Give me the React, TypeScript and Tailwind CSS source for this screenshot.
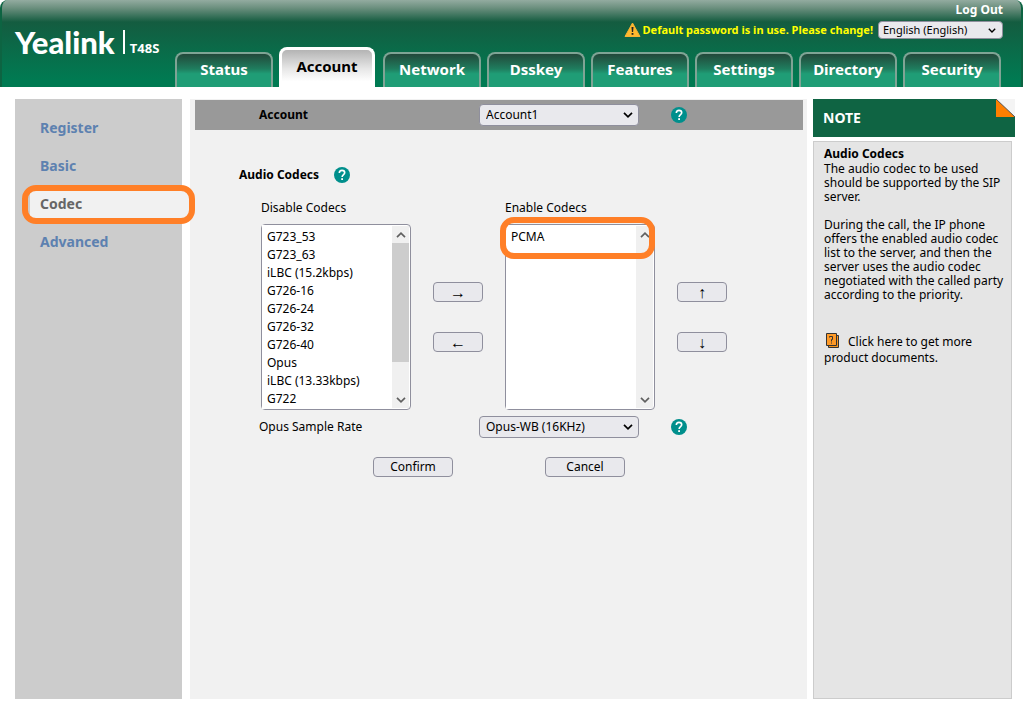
import { useState } from 'react';
import type { ReactNode } from 'react';
import clsx from 'clsx';

const TABS = ['Status', 'Account', 'Network', 'Dsskey', 'Features', 'Settings', 'Directory', 'Security'];
const MENU = ['Register', 'Basic', 'Codec', 'Advanced'];

const DISABLED_CODECS = [
  'G723_53',
  'G723_63',
  'iLBC (15.2kbps)',
  'G726-16',
  'G726-24',
  'G726-32',
  'G726-40',
  'Opus',
  'iLBC (13.33kbps)',
  'G722',
];

function Chevron({ className }: { className: string }) {
  return (
    <svg viewBox="0 0 10 6" className={className} fill="none" stroke="currentColor" strokeWidth="1.7">
      <path d="M1 0.8 5 4.8 9 0.8" />
    </svg>
  );
}

function HelpIcon() {
  return (
    <button type="button" aria-label="Help" className="h-4 w-4 shrink-0">
      <svg viewBox="0 0 16 16" className="h-4 w-4">
        <circle cx="8" cy="8" r="8" fill="#008f8c" />
        <path d="M5.3 6.1C5.3 4.3 6.5 3.4 8 3.4s2.7.9 2.7 2.4c0 1.8-2.6 2-2.6 4.3" fill="none" stroke="#fff" strokeWidth="1.6" />
        <rect x="7.2" y="11.2" width="1.8" height="1.8" fill="#fff" />
      </svg>
    </button>
  );
}

function Dropdown({ id, options }: { id: string; options: string[] }) {
  return (
    <div className="grid w-40 shrink-0 items-center">
      <select
        id={id}
        className="col-start-1 row-start-1 h-[22px] appearance-none rounded border border-[#8f8f9d] bg-[#e9e9ed] pl-1.5 text-black"
      >
        {options.map(o => <option key={o}>{o}</option>)}
      </select>
      <Chevron className="pointer-events-none col-start-1 row-start-1 mr-1.5 h-1.5 w-2.5 justify-self-end" />
    </div>
  );
}

function FormButton({ children, label, className }: { children: ReactNode; label?: string; className: string }) {
  return (
    <button
      type="button"
      aria-label={label}
      className={clsx('flex h-5 items-center justify-center rounded border border-[#8f8f9d] bg-[#e9e9ed] hover:bg-[#d0d0d7]', className)}
    >
      {children}
    </button>
  );
}

function CodecList({ id, label, codecs, highlight, thumb }: { id: string; label: string; codecs: string[]; highlight?: boolean; thumb?: boolean }) {
  return (
    <div className="w-[150px]">
      <label htmlFor={id} className="block h-6 leading-4">{label}</label>
      <div className="relative flex h-[186px] rounded-sm border border-[#8f8f9d] bg-white">
        <select
          id={id}
          multiple
          size={10}
          className="min-w-0 flex-1 overflow-hidden bg-white pt-[3px] outline-none"
        >
          {codecs.map(c => (
            <option key={c} className="h-[18px] p-0 pl-[5px] leading-[18px]">{c}</option>
          ))}
        </select>
        <div className="my-px mr-px flex w-[17px] flex-col items-center justify-between bg-[#f0f0f0] text-[#606060]">
          <div className="flex h-[17px] items-center">
            <Chevron className="h-1.5 w-2.5 rotate-180" />
          </div>
          <div className={clsx('mb-auto h-[119px] w-full', thumb && 'bg-[#cdcdcd]')} />
          <div className="flex h-[17px] items-center">
            <Chevron className="h-1.5 w-2.5" />
          </div>
        </div>
        {highlight && (
          <div className="pointer-events-none absolute -top-2 -left-1.5 h-[42px] w-[155px] rounded-[14px] border-6 border-[#ff7f27]" />
        )}
      </div>
    </div>
  );
}

function Header() {
  return (
    <header className="flex h-[87px] rounded-t-lg border-x-2 border-x-[#0d6442] bg-linear-[to_bottom,#93aba0_0px,#6b8f7e_8px,#145c40_22px,#0a6b49_50px,#007a52_80px] pr-[18px]">
      <div className="flex w-[173px] shrink-0 items-end pb-[33px] pl-[13px] text-white">
        <span className="font-[Lato] text-[31px] leading-6 font-black">Yealink</span>
        <span className="mr-[5px] ml-2 h-6 w-0.5 bg-white" />
        <span className="text-[13px] leading-3 font-bold">T48S</span>
      </div>
      <div className="flex flex-1 flex-col items-end">
        <a href="#logout" className="h-[19px] pt-0.5 text-xs leading-4 font-bold text-white">Log Out</a>
        <div className="flex h-[22px] items-center">
          <svg viewBox="0 0 17 16" className="h-4 w-[17px]">
            <path d="M8.5 1 16 14.5H1Z" fill="#ffb92e" stroke="#f9b233" strokeLinejoin="round" />
            <path d="M7.5 5h2l-.4 5H7.9Z" fill="#222" />
            <rect x="7.6" y="11" width="1.8" height="1.8" fill="#222" />
          </svg>
          <span className="mr-[5px] ml-0.5 text-[11px] font-bold text-[#ffff00]">Default password is in use. Please change!</span>
          <div className="grid w-[125px] items-center">
            <select
              aria-label="Language"
              className="col-start-1 row-start-1 h-[18px] appearance-none rounded border border-[#8f8f9d] bg-[#e9e9ed] pl-1 text-[11px] text-black"
            >
              <option>English (English)</option>
            </select>
            <Chevron className="pointer-events-none col-start-1 row-start-1 mr-[7px] h-[5px] w-2 justify-self-end" />
          </div>
        </div>
        <nav className="flex w-full flex-1 items-end gap-1.5">
          {TABS.map(tab => (
            <a
              key={tab}
              href={`#${tab.toLowerCase()}`}
              className={clsx(
                'flex justify-center rounded-t-lg text-[15px] leading-5 font-bold',
                tab === 'Account'
                  ? 'mr-0.5 h-10 w-24 border-x-3 border-t-3 border-white bg-linear-[to_bottom,#b4b4b4,#e6e6e6_50%,#fff_85%] pt-1.5 text-black'
                  : 'h-[35px] w-[98px] border-x-2 border-t-2 border-[#7fa495] bg-linear-[to_bottom,#22483a,#1f7d5e_45%,#1f9d76_60%] pt-[5px] text-white'
              )}
            >
              {tab}
            </a>
          ))}
        </nav>
      </div>
    </header>
  );
}

function Sidebar() {
  return (
    <nav className="flex w-[167px] shrink-0 flex-col gap-2.5 bg-[#ccc] pt-[15px] pl-[15px]">
      {MENU.map(item => (
        <a
          key={item}
          href={`#${item.toLowerCase()}`}
          className={clsx(
            'relative flex h-7 items-center pl-2.5 text-sm font-bold',
            item === 'Codec' ? '-mr-2 bg-[#f1f1f1] text-[#666]' : 'text-[#5d81b0]'
          )}
        >
          {item}
          {item === 'Codec' && (
            <span className="pointer-events-none absolute -top-[5px] -right-[5px] -bottom-1.5 -left-2 rounded-[14px] border-6 border-[#ff7f27]" />
          )}
        </a>
      ))}
    </nav>
  );
}

function NotePanel() {
  return (
    <aside className="mr-2 flex w-[202px] shrink-0 flex-col">
      <div className="flex h-[38px] justify-between bg-[#0f6443] pl-2.5">
        <h2 className="self-center text-sm font-bold text-white">NOTE</h2>
        <svg viewBox="0 0 19 18" className="h-[18px] w-[19px]">
          <rect width="19" height="18" fill="#f4f4f4" />
          <path d="M0 0v18h19Z" fill="#ff7f00" />
          <path d="M0 0 19 18" stroke="#555" />
        </svg>
      </div>
      <div className="mt-1 mr-[3px] flex-1 border border-[#ccc] bg-[#e5e5e5] pt-[5px] pr-1 pl-2.5 leading-[14px]">
        <h3 className="mb-px font-bold">Audio Codecs</h3>
        <p>The audio codec to be used should be supported by the SIP server.</p>
        <p className="mt-3.5">
          During the call, the IP phone offers the enabled audio codec list to the server, and then the server uses the
          audio codec negotiated with the called party according to the priority.
        </p>
        <a href="#documents" className="mt-[31px] block leading-4">
          <svg viewBox="0 0 14 15" className="mr-2 ml-0.5 inline h-[15px] w-3.5 align-[-2px]">
            <path d="M2.5 2.5h10v12h-10z" fill="#f7941d" stroke="#333" />
            <path d="M.5.5h10v12H.5z" fill="#ff9a27" stroke="#333" />
            <path d="M3.5 4.5V3.500h3v3h-1v2" fill="none" stroke="#333" />
            <path d="M5 9.5h1v1H5z" fill="#333" />
          </svg>
          Click here to get more product documents.
        </a>
      </div>
    </aside>
  );
}

export default function App() {
  const [accounts] = useState(['Account1', 'Account2', 'Account3']);

  return (
    <div className="bg-white font-['Noto_Sans',sans-serif] text-xs text-black">
      <Header />
      <div className="flex min-h-[612px] pt-3 pl-[15px]">
        <Sidebar />
        <main className="mr-1.5 ml-2 min-w-0 flex-1 bg-[#f1f1f1] pt-px pr-1 pl-[5px]">
          <div className="flex h-[30px] items-center bg-[#999] pl-16">
            <label htmlFor="account" className="w-[220px] font-bold">Account</label>
            <Dropdown id="account" options={accounts} />
            <div className="ml-8 flex"><HelpIcon /></div>
          </div>

          <div className="mt-[37px] flex items-center gap-[15px] pl-11">
            <h2 className="font-bold">Audio Codecs</h2>
            <HelpIcon />
          </div>

          <div className="mt-[17px] flex gap-[22px] pl-[66px]">
            <CodecList id="disabled" label="Disable Codecs" codecs={DISABLED_CODECS} thumb />
            <div className="flex flex-col gap-[30px] pt-[82px]">
              <FormButton label="Enable codec" className="w-[50px] text-base">→</FormButton>
              <FormButton label="Disable codec" className="w-[50px] text-base">←</FormButton>
            </div>
            <CodecList id="enabled" label="Enable Codecs" codecs={['PCMA']} highlight />
            <div className="flex flex-col gap-[30px] pt-[82px]">
              <FormButton label="Move up" className="w-[50px] text-base">↑</FormButton>
              <FormButton label="Move down" className="w-[50px] text-base">↓</FormButton>
            </div>
          </div>

          <div className="mt-1.5 flex items-center pl-16">
            <label htmlFor="rate" className="w-[220px]">Opus Sample Rate</label>
            <Dropdown id="rate" options={['Opus-WB (16KHz)', 'Opus-NB (8KHz)']} />
            <div className="ml-8 flex"><HelpIcon /></div>
          </div>

          <div className="mt-[19px] flex gap-[92px] pl-[178px]">
            <FormButton className="w-20">Confirm</FormButton>
            <FormButton className="w-20">Cancel</FormButton>
          </div>
        </main>
        <NotePanel />
      </div>
    </div>
  );
}
